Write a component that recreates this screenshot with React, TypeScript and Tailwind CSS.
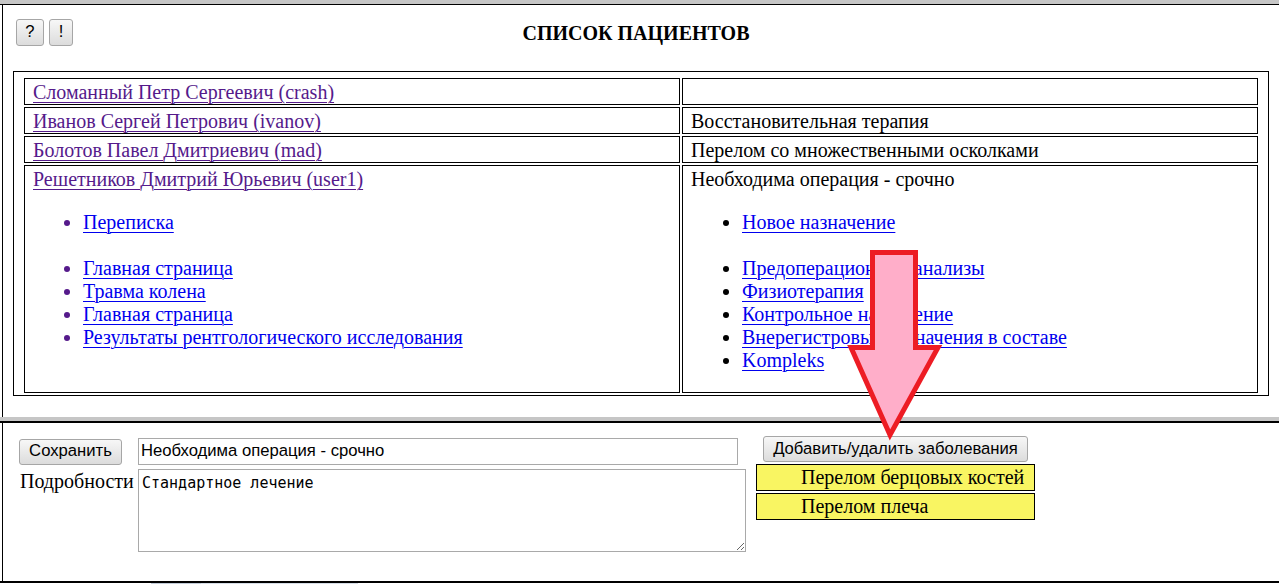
import React from "react";

const btn =
  "box-border border border-[#a6a6a6] rounded-[3px] bg-gradient-to-b from-[#f7f7f7] to-[#dcdcdc] text-black font-['Liberation_Sans',Arial,sans-serif] text-[16.67px] leading-none flex items-center justify-center";

function Cell({ children, className = "" }: { children?: React.ReactNode; className?: string }) {
  return (
    <div className={"border border-black pt-[2px] pb-0 px-[8px] leading-[23px] " + className}>
      {children}
    </div>
  );
}

const nameLink = "text-[#551a8b] underline decoration-1 underline-offset-[3px]";
const subLink = "text-[#0000ee] underline decoration-1 underline-offset-[3px]";

export default function App() {
  return (
    <div className="relative w-[1279px] h-[584px] overflow-hidden bg-white font-['Liberation_Serif','Times_New_Roman',serif] text-black text-[20px] leading-[23px]">
      <div className="h-[4px] bg-[#c6c6c6]" />
      {/* top frame */}
      <div className="h-[413px] border-t border-black">
        <div className="ml-[2px] h-full border-l border-black pt-[14px] pl-[10px]">
          <div className="grid">
            <div className="[grid-area:1/1] flex gap-[5px] ml-[3px]">
              <div className={btn + " w-[28px] h-[27px]"}>?</div>
              <div className={btn + " w-[24px] h-[27px]"}>!</div>
            </div>
            <div className="[grid-area:1/1] justify-self-center self-center mr-[20px] font-bold text-[20px] leading-[23px] pt-[1px]">
              СПИСОК ПАЦИЕНТОВ
            </div>
          </div>
          <div className="mt-[25px] w-[1256px] border border-black pt-[6px] pb-[2px] pl-[10px] pr-[10px]">
            <div className="grid grid-cols-[656px_576px] gap-[2px]">
              <Cell>
                <span className={nameLink}>Сломанный Петр Сергеевич (crash)</span>
              </Cell>
              <Cell>&nbsp;</Cell>
              <Cell>
                <span className={nameLink}>Иванов Сергей Петрович (ivanov)</span>
              </Cell>
              <Cell>Восстановительная терапия</Cell>
              <Cell>
                <span className={nameLink}>Болотов Павел Дмитриевич (mad)</span>
              </Cell>
              <Cell>Перелом со множественными осколками</Cell>
              <Cell>
                <span className={nameLink}>Решетников Дмитрий Юрьевич (user1)</span>
                <ul className="list-disc pl-[50px] my-[20px] text-[#551a8b]">
                  <li>
                    <span className={subLink}>Переписка</span>
                  </li>
                  <li className="list-none h-[23px]" />
                  <li>
                    <span className={subLink}>Главная страница</span>
                  </li>
                  <li>
                    <span className={subLink}>Травма колена</span>
                  </li>
                  <li>
                    <span className={subLink}>Главная страница</span>
                  </li>
                  <li>
                    <span className={subLink}>Результаты рентгологического исследования</span>
                  </li>
                </ul>
              </Cell>
              <Cell>
                <div>Необходима операция - срочно</div>
                <ul className="list-disc pl-[51px] mt-[20px] mb-[20px]">
                  <li>
                    <span className={subLink}>Новое назначение</span>
                  </li>
                  <li className="list-none h-[23px]" />
                  <li>
                    <span className={subLink}>Предоперационные анализы</span>
                  </li>
                  <li>
                    <span className={subLink}>Физиотерапия</span>
                  </li>
                  <li>
                    <span className={subLink}>Контрольное назначение</span>
                  </li>
                  <li>
                    <span className={subLink}>Внерегистровые назначения в составе</span>
                  </li>
                  <li>
                    <span className={subLink}>Kompleks</span>
                  </li>
                </ul>
              </Cell>
            </div>
          </div>
        </div>
      </div>
      <div className="h-[4px] bg-[#c6c6c6]" />
      {/* bottom frame */}
      <div className="h-[162px] border-t-2 border-b-2 border-black">
        <div className="ml-[2px] h-full border-l border-black pt-[13px] pl-[16px] flex items-start">
          <div className="w-[727px] mt-[2px]">
            <div className="flex items-center h-[27px]">
              <div className={btn + " w-[103px] h-[26px]"}>Сохранить</div>
              <div className="ml-[16px] w-[600px] h-[27px] box-border border border-[#a9a9a9] px-[2px] flex items-center font-['Liberation_Sans',Arial,sans-serif] text-[16.67px] leading-none">
                Необходима операция - срочно
              </div>
            </div>
            <div className="mt-[4px] flex items-start">
              <div className="w-[119px] leading-[23px] pl-[1px] pt-[1px]">Подробности</div>
              <textarea
                className="w-[608px] h-[83px] box-border border border-[#a9a9a9] pt-[5px] px-[3px] pb-[3px] font-['DejaVu_Sans_Mono',monospace] text-[15px] leading-[17px] outline-none resize-y"
                defaultValue="Стандартное лечение"
              />
            </div>
          </div>
          <div className="ml-[10px]">
            <div className={btn + " ml-[7px] w-[265px] h-[26px]"}>Добавить/удалить заболевания</div>
            <div className="mt-[2px] w-[279px] h-[27px] box-border border border-black bg-[#f9f562] pl-[44px] leading-[24px]">
              Перелом берцовых костей
            </div>
            <div className="mt-[2px] w-[279px] h-[27px] box-border border border-black bg-[#f9f562] pl-[44px] leading-[24px]">
              Перелом плеча
            </div>
          </div>
        </div>
      </div>
      <div className="h-[1px] flex">
        <div className="w-[151px]" />
        <div className="w-[50px] bg-[#c3ccd8]" />
        <div className="w-[157px] bg-[#d6dde6]" />
      </div>
      {/* overlay arrow */}
      <svg className="absolute left-0 top-0 pointer-events-none" width="1279" height="584">
        <polygon
          points="872.5,252.5 915.5,252.5 915.5,347.5 938,347.5 890,435 851,347.5 872.5,347.5"
          fill="#ffaec9"
          stroke="#ed1c24"
          strokeWidth="5"
          strokeLinejoin="miter"
          strokeMiterlimit="10"
        />
      </svg>
    </div>
  );
}
